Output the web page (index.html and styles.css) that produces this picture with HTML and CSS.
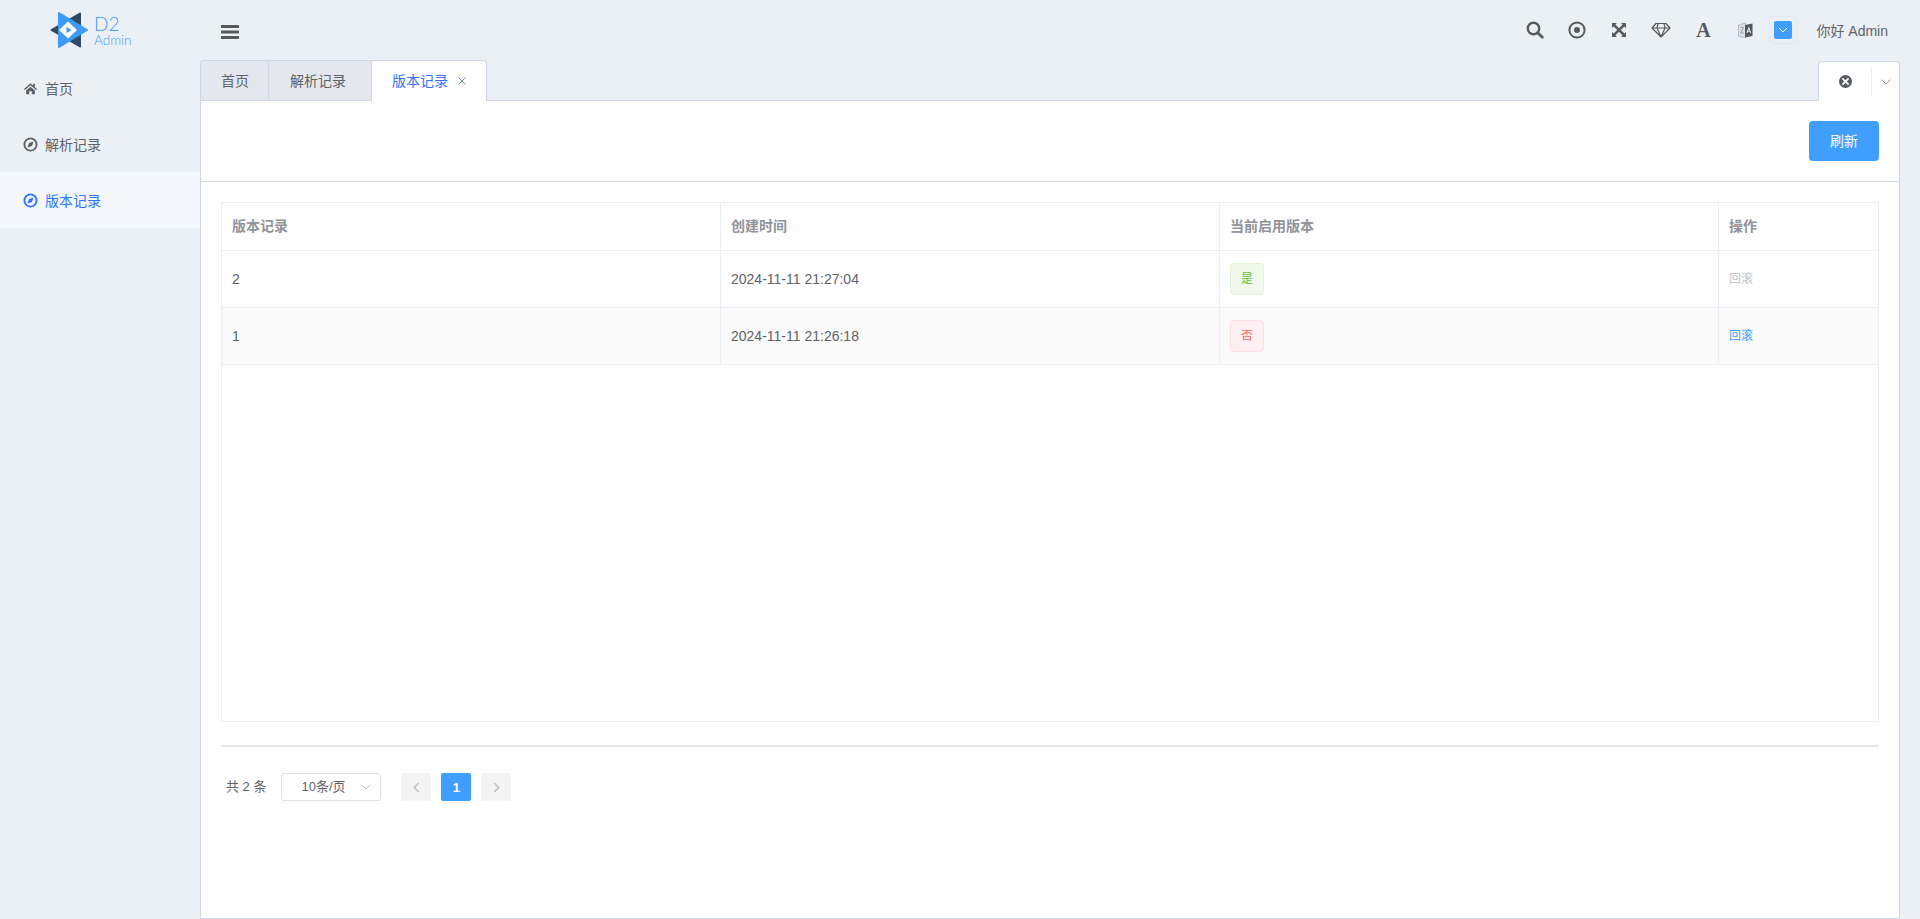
FILE: index.html
```html
<!DOCTYPE html>
<html lang="zh-CN">

<head>
    <meta charset="utf-8">
    <title>版本记录</title>
    <link rel="stylesheet" href="styles.css">
</head>

<body>
    <aside class="sidebar">
        <div class="logo">
            <svg class="logo-mark" viewBox="0 0 38 36" width="38" height="36">
                <path d="M30 1.5 L1.5 18 L30 34.5 Z" fill="#2f4a63" stroke="#2f4a63" stroke-width="2" stroke-linejoin="round"/>
                <path d="M9 1 L37 18 L9 35 Z" fill="#3f9bfa" stroke="#3f9bfa" stroke-width="2" stroke-linejoin="round"/>
                <path d="M18 9.5 L27 18 L18 26.5 L9 18 Z" fill="#ffffff"/>
                <path d="M16.5 14.8 L21.5 18 L16.5 21.2 Z" fill="#3f9bfa"/>
            </svg>
            <div class="logo-text">
                <span class="logo-d2">D2</span>
                <span class="logo-admin">Admin</span>
            </div>
        </div>
        <nav class="menu">
            <a class="menu-item">
                <svg class="menu-icon" viewBox="0 0 16 16"><path d="M8 2.5 L1 8.6 L2 9.7 L8 4.6 L14 9.7 L15 8.6 L12.7 6.6 V3 H10.8 V4.9 Z M3.3 10 V14 H6.6 V10.8 H9.4 V14 H12.7 V10 L8 6 Z"/></svg>
                <span>首页</span>
            </a>
            <a class="menu-item">
                <svg class="menu-icon" viewBox="0 0 16 16"><circle cx="8" cy="8" r="6.5" fill="none" stroke="currentColor" stroke-width="2"/><path d="M11.2 4.8 L9.6 9.6 L4.8 11.2 L6.4 6.4 Z"/></svg>
                <span>解析记录</span>
            </a>
            <a class="menu-item active">
                <svg class="menu-icon" viewBox="0 0 16 16"><circle cx="8" cy="8" r="6.5" fill="none" stroke="currentColor" stroke-width="2"/><path d="M11.2 4.8 L9.6 9.6 L4.8 11.2 L6.4 6.4 Z"/></svg>
                <span>版本记录</span>
            </a>
        </nav>
    </aside>

    <div class="main">
        <header class="topbar">
            <svg class="toggle" viewBox="0 0 18 14" width="18" height="14"><path d="M0 0 H18 V3 H0 Z M0 5.5 H18 V8.5 H0 Z M0 11 H18 V14 H0 Z"/></svg>
            <div class="tools">
                <span class="tool"><svg viewBox="0 0 18 18" width="18" height="18"><circle cx="7.5" cy="7.5" r="5.7" fill="none" stroke="currentColor" stroke-width="2.4"/><path d="M11.8 11.8 L16.3 16.3" stroke="currentColor" stroke-width="2.8" stroke-linecap="round"/></svg></span>
                <span class="tool"><svg viewBox="0 0 18 18" width="18" height="18"><circle cx="9" cy="9" r="7.6" fill="none" stroke="currentColor" stroke-width="2"/><circle cx="9" cy="9" r="3"/></svg></span>
                <span class="tool"><svg viewBox="0 0 14 14" width="14" height="14"><path d="M0 0 H5 L3.4 1.6 L7 5.2 L10.6 1.6 L9 0 H14 V5 L12.4 3.4 L8.8 7 L12.4 10.6 L14 9 V14 H9 L10.6 12.4 L7 8.8 L3.4 12.4 L5 14 H0 V9 L1.6 10.6 L5.2 7 L1.6 3.4 L0 5 Z"/></svg></span>
                <span class="tool"><svg viewBox="0 0 20 16" width="20" height="16"><path d="M5 1.5 H15 L19 6 L10 15 L1 6 Z M1 6 H19 M7 1.5 L6 6 L10 15 L14 6 L13 1.5" fill="none" stroke="currentColor" stroke-width="1.2" stroke-linejoin="round"/></svg></span>
                <span class="tool tool-letter">A</span>
                <span class="tool"><svg viewBox="0 0 15 17" width="15" height="17"><path d="M0.5 3 L7.5 1 V16 L0.5 14 Z" fill="#dde1e7" stroke="#a9afb8" stroke-width="0.7"/><path d="M7 3 L14.5 1.5 V14 L7 15.5 Z"/><path d="M9 11 L10.8 5.5 L12.6 11 M9.7 9.2 H12" fill="none" stroke="#ebf0f7" stroke-width="1"/><path d="M2.4 5.5 H5.6 L2.6 11 H5.8" fill="none" stroke="#8b929c" stroke-width="0.8"/></svg></span>
                <span class="theme-box">
                    <span class="theme-color"><svg viewBox="0 0 10 6" width="10" height="6"><path d="M1 1 L5 5 L9 1" fill="none" stroke="#fff" stroke-width="1"/></svg></span>
                </span>
                <span class="hello">你好 Admin</span>
            </div>
        </header>

        <div class="tabs">
            <div class="tab-list">
                <a class="tab tab-home">首页</a>
                <a class="tab tab-parse">解析记录</a>
                <a class="tab active">版本记录<svg class="tab-close" viewBox="0 0 8 8" width="8" height="8"><path d="M0.5 0.5 L7.5 7.5 M7.5 0.5 L0.5 7.5" stroke="#6f8fc9" stroke-width="1"/></svg></a>
            </div>
            <div class="tab-control">
                <span class="tab-control-btn"><svg viewBox="0 0 14 14" width="13" height="13"><path fill-rule="evenodd" d="M7 0 A7 7 0 1 0 7 14 A7 7 0 1 0 7 0 Z M4.4 3 L7 5.6 L9.6 3 L11 4.4 L8.4 7 L11 9.6 L9.6 11 L7 8.4 L4.4 11 L3 9.6 L5.6 7 L3 4.4 Z"/></svg></span>
                <span class="tab-control-arrow"><svg viewBox="0 0 10 6" width="10" height="6"><path d="M0.5 0.5 L5 5 L9.5 0.5" fill="none" stroke="#909399" stroke-width="1"/></svg></span>
            </div>
        </div>

        <section class="content">
            <div class="content-head">
                <button class="btn-primary">刷新</button>
            </div>
            <div class="content-body">
                <div class="table-wrap">
                    <table class="table">
                        <colgroup>
                            <col class="col-wide">
                            <col class="col-wide">
                            <col class="col-wide">
                            <col>
                        </colgroup>
                        <thead>
                            <tr>
                                <th>版本记录</th>
                                <th>创建时间</th>
                                <th>当前启用版本</th>
                                <th>操作</th>
                            </tr>
                        </thead>
                        <tbody>
                            <tr>
                                <td>2</td>
                                <td>2024-11-11 21:27:04</td>
                                <td><span class="tag tag-yes">是</span></td>
                                <td><a class="link disabled">回滚</a></td>
                            </tr>
                            <tr class="striped">
                                <td>1</td>
                                <td>2024-11-11 21:26:18</td>
                                <td><span class="tag tag-no">否</span></td>
                                <td><a class="link">回滚</a></td>
                            </tr>
                        </tbody>
                    </table>
                </div>
                <div class="pager">
                    <span class="pager-total">共 2 条</span>
                    <span class="pager-size"><span class="pager-size-text">10条/页</span>
                        <svg class="pager-caret" viewBox="0 0 10 6" width="10" height="6"><path d="M0.5 0.5 L5 5 L9.5 0.5" fill="none" stroke="#c0c4cc" stroke-width="1"/></svg>
                    </span>
                    <span class="pager-btn"><svg viewBox="0 0 8 12" width="7" height="11"><path d="M6.5 1 L1.5 6 L6.5 11" fill="none" stroke="#c0c4cc" stroke-width="2"/></svg></span>
                    <span class="pager-btn current">1</span>
                    <span class="pager-btn"><svg viewBox="0 0 8 12" width="7" height="11"><path d="M1.5 1 L6.5 6 L1.5 11" fill="none" stroke="#c0c4cc" stroke-width="2"/></svg></span>
                </div>
            </div>
        </section>
    </div>
</body>

</html>
```

FILE: styles.css
```css
* {
    box-sizing: border-box;
}

html,
body {
    height: 100%;
}

body {
    margin: 0;
    display: flex;
    overflow: hidden;
    background-color: #ebf0f7;
    color: #606266;
    font-family: "Liberation Sans", "Noto Sans CJK SC", sans-serif;
    font-size: 14px;
}

.sidebar {
    width: 200px;
    flex-shrink: 0;
}

.logo {
    height: 60px;
    display: flex;
    align-items: flex-start;
    padding: 12px 0 0 50px;
}

.logo-text {
    display: flex;
    flex-direction: column;
    margin-left: 6px;
    color: #3f9bfa;
    font-family: "Lato", sans-serif;
}

.logo-d2 {
    font-size: 19px;
    font-weight: 300;
    line-height: 19px;
    margin-top: 2px;
}

.logo-admin {
    font-size: 13.5px;
    font-weight: 300;
    line-height: 14px;
}

.menu-item {
    display: flex;
    align-items: center;
    height: 56px;
    padding-left: 23px;
    cursor: pointer;
}

.menu-item.active {
    background-color: #f4f7fb;
    color: #2f74ff;
}

.menu-icon {
    width: 15px;
    height: 15px;
    margin-right: 7px;
    fill: currentColor;
}

.main {
    flex: 1;
    min-width: 0;
    display: flex;
    flex-direction: column;
    padding-right: 20px;
}

.topbar {
    height: 60px;
    flex-shrink: 0;
    display: flex;
    align-items: center;
    justify-content: space-between;
    padding: 3px 0 0 21px;
}

.toggle {
    fill: #565a60;
}

.tools {
    display: flex;
    align-items: center;
    margin-bottom: 3px;
    color: #565a60;
}

.tool {
    width: 42px;
    display: flex;
    justify-content: center;
    fill: currentColor;
}

.tool-letter {
    font-family: "Liberation Serif", serif;
    font-size: 20px;
    font-weight: bold;
    line-height: 20px;
}

.theme-box {
    width: 28px;
    height: 28px;
    display: flex;
    align-items: center;
    justify-content: center;
    border: 1px solid #e4e8ee;
    border-radius: 4px;
    margin-left: 3px;
}

.theme-color {
    width: 18px;
    height: 18px;
    display: flex;
    align-items: center;
    justify-content: center;
    background-color: #409eff;
    border-radius: 2px;
}

.hello {
    margin: 0 12px 0 19px;
    color: #606266;
}

.tabs {
    height: 41px;
    flex-shrink: 0;
    display: flex;
    justify-content: space-between;
    border-bottom: 1px solid #cfd7e5;
}

.tab-list {
    display: flex;
}

.tab {
    height: 40px;
    display: flex;
    align-items: center;
    padding: 0 20px;
    background-color: #e4e8ee;
    border: 1px solid #cfd7e5;
    border-left-width: 0;
    border-bottom-width: 0;
    line-height: 40px;
}

.tab-home {
    padding-right: 19px;
    border-left-width: 1px;
    border-top-left-radius: 4px;
}

.tab-parse {
    padding: 0 25px 0 21px;
}

.tab.active {
    height: 41px;
    padding-right: 20px;
    background-color: #fff;
    color: #2f74ff;
    border-top-right-radius: 4px;
}

.tab-close {
    margin-left: 10px;
}

.tab-control {
    width: 82px;
    height: 40px;
    margin-top: 1px;
    display: flex;
    align-items: center;
    background-color: #fff;
    border: 1px solid #cfd7e5;
    border-bottom-width: 0;
    border-radius: 4px 4px 0 0;
}

.tab-control-btn {
    width: 53px;
    height: 28px;
    display: flex;
    align-items: center;
    justify-content: center;
    fill: #565a60;
    border-right: 1px solid #e8ebf0;
}

.tab-control-arrow {
    flex: 1;
    display: flex;
    justify-content: center;
}

.content {
    flex: 1;
    min-height: 0;
    background-color: #fff;
    border: 1px solid #cfd7e5;
    border-top-width: 0;
}

.content-head {
    height: 81px;
    display: flex;
    align-items: center;
    justify-content: flex-end;
    padding-right: 20px;
    border-bottom: 1px solid #d4dae0;
}

.btn-primary {
    width: 70px;
    height: 40px;
    padding: 0 0 2px;
    border: 0;
    border-radius: 4px;
    background-color: #409eff;
    color: #fff;
    font-family: inherit;
    font-size: 14px;
}

.content-body {
    padding: 20px 20px 0;
}

.table-wrap {
    height: 520px;
    border: 1px solid #ebeef5;
}

.table {
    width: 100%;
    table-layout: fixed;
    border-collapse: separate;
    border-spacing: 0;
}

.col-wide {
    width: 499px;
}

.table th,
.table td {
    padding: 0 10px;
    text-align: left;
    border-right: 1px solid #ebeef5;
    border-bottom: 1px solid #ebeef5;
}

.table th:last-child,
.table td:last-child {
    border-right: 0;
}

.table th {
    height: 48px;
    padding-bottom: 3px;
    color: #909399;
    font-weight: bold;
}

.table td {
    height: 57px;
}

.striped td {
    background-color: #fafafa;
}

.tag {
    display: inline-block;
    width: 34px;
    height: 32px;
    line-height: 30px;
    text-align: center;
    font-size: 12px;
    border: 1px solid;
    border-radius: 4px;
}

.tag-yes {
    background-color: #f0f9eb;
    border-color: #e1f3d8;
    color: #67c23a;
}

.tag-no {
    background-color: #fef0f0;
    border-color: #fde2e2;
    color: #f56c6c;
}

.link {
    display: inline-block;
    margin-bottom: 3px;
    font-size: 12px;
    color: #409eff;
}

.link.disabled {
    color: #c0c4cc;
}

.pager {
    display: flex;
    align-items: center;
    height: 56px;
    margin-top: 23px;
    padding: 26px 0 0 5px;
    border-top: 2px solid #e6e6e6;
    font-size: 13px;
}

.pager-total {
    margin: 0 15px 3px 0;
}

.pager-size {
    width: 100px;
    height: 28px;
    display: flex;
    align-items: center;
    justify-content: space-between;
    padding: 0 9px 0 19px;
    border: 1px solid #dcdfe6;
    border-radius: 3px;
    margin-right: 20px;
}

.pager-size-text {
    margin-bottom: 3px;
}

.pager-btn {
    width: 30px;
    height: 28px;
    display: flex;
    align-items: center;
    justify-content: center;
    margin-right: 10px;
    background-color: #f4f4f5;
    border-radius: 2px;
    font-weight: bold;
}

.pager-btn.current {
    background-color: #409eff;
    color: #fff;
}
```
